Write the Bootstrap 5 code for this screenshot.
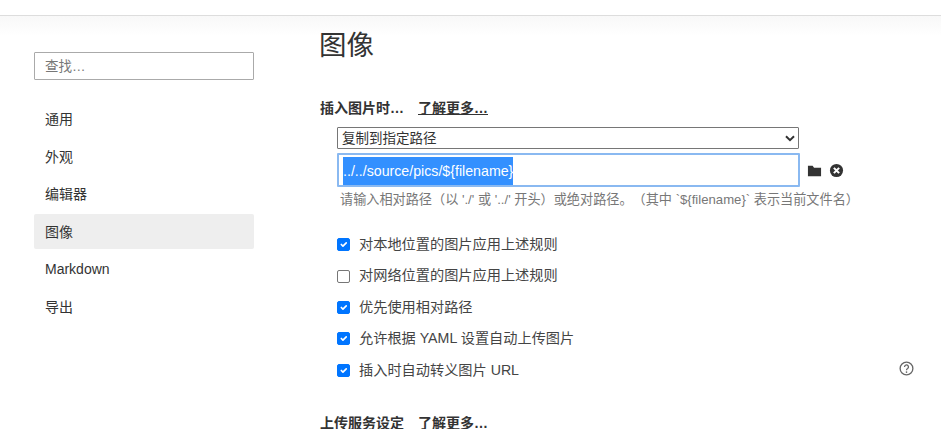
<!DOCTYPE html>
<html lang="zh-CN">
<head>
<meta charset="utf-8">
<title>偏好设置 - 图像</title>
<link href="https://cdn.jsdelivr.net/npm/bootstrap@5.3.0/dist/css/bootstrap.min.css" rel="stylesheet">
<style>
html, body { height: 100%; overflow: hidden; }
body { font-family: "Liberation Sans", "Noto Sans CJK SC", sans-serif; font-size: 14px; color: #333; background: #fff; text-spacing-trim: space-all; }
.top-strip { height: 16px; background: #fff; border-bottom: 1px solid #ddd; }
.top-fade { height: 20px; background: linear-gradient(#f8f8f8, #fff); }
.shell { height: 393px; }
.side-pane { width: 288px; padding: 16px 34px 0; flex: none; }
.side-search { height: 28px; border: 1px solid #aaa; border-radius: 1px; padding: 0 10px; font-size: 13.5px; color: #333; }
.side-search::placeholder { color: #777; }
.side-search:focus { border-color: #aaa; box-shadow: none; }
.side-nav { margin-top: 21px; }
.side-link { display: block; height: 35px; line-height: 36px; padding: 0 11px; margin-bottom: 2.5px; color: #333; border-radius: 2px; text-decoration: none; font-size: 14px; }
.side-link.is-on { background: #eee; }
.main-pane { padding-left: 32px; position: relative; flex: 1; margin-top: -24px; min-width: 0; }
.pane-title { font-size: 27.5px; font-weight: 400; line-height: 36px; margin: 16px 0 0 -1px; color: #333; }
.group-title { font-weight: 700; font-size: 14px; line-height: 18px; margin: 35px 0 0; color: #333; white-space: nowrap; }
.group-title a { color: #333; margin-left: 14px; text-decoration: underline; }
.group-title.plain-link { margin-top: 31px; line-height: 12px; }
.group-title.plain-link a { text-decoration: none; }
.opt-block { margin-left: 17px; width: 462px; }
.path-select { width: 462px; height: 22px; padding: 1px 0 0 4px; font-size: 13.5px; line-height: 18px; color: #333; border: 1px solid #767676; border-radius: 1px; margin-top: 10px; background-image: url("data:image/svg+xml,%3Csvg xmlns='http://www.w3.org/2000/svg' viewBox='0 0 10 7'%3E%3Cpath d='M1 1.2l4 4 4-4' fill='none' stroke='%23333' stroke-width='2'/%3E%3C/svg%3E"); background-position: right 3px center; background-size: 10px 7px; }
.path-row { margin-top: 4px; gap: 7px; }
.path-input { width: 463px; height: 34px; flex: none; border: 2px solid #8ab9f1; padding: 2px 4px; font-size: 14.2px; line-height: 26px; color: #fff; border-radius: 1px; white-space: nowrap; overflow: hidden; }
.path-sel { display: inline-block; background: #3390ff; line-height: 28px; }
.path-btn { width: 15px; height: 15px; flex: none; }
.path-hint { color: #777; font-size: 13.15px; line-height: 18px; margin: 4px 0 0 20px; white-space: nowrap; }
.check-list { margin-top: 20px; margin-left: 17px; }
.check-line { height: 31.4px; display: flex; align-items: center; margin: 0; padding: 0; min-height: 0; }
.check-line .form-check-input { width: 13px; height: 13px; margin: 0 9px 0 0; border-radius: 2px; border-color: #767676; float: none; flex: none; }
.check-line .form-check-input:checked { background-color: #0075ff; border-color: #0075ff; }
.check-line label { color: #444; font-size: 14.2px; }
.help-mark { position: absolute; left: 611px; top: 349px; width: 15px; height: 15px; }
</style>
</head>
<body>
<div class="top-strip"></div>
<div class="top-fade"></div>
<div class="d-flex shell">
  <aside class="side-pane">
    <input class="form-control side-search" type="text" placeholder="查找…">
    <nav class="side-nav">
      <a class="side-link" href="#">通用</a>
      <a class="side-link" href="#">外观</a>
      <a class="side-link" href="#">编辑器</a>
      <a class="side-link is-on" href="#">图像</a>
      <a class="side-link" href="#">Markdown</a>
      <a class="side-link" href="#">导出</a>
    </nav>
  </aside>
  <main class="main-pane">
    <h1 class="pane-title">图像</h1>
    <p class="group-title">插入图片时…<a href="#">了解更多…</a></p>
    <div class="opt-block">
      <select class="form-select path-select"><option>复制到指定路径</option></select>
      <div class="d-flex align-items-center path-row">
        <div class="form-control path-input"><span class="path-sel">../../source/pics/${filename}</span></div>
        <svg class="path-btn" viewBox="0 0 16 16" aria-hidden="true"><path fill="#333" d="M1 3h5l1.5 2H15v9H1z"/></svg>
        <svg class="path-btn" viewBox="0 0 16 16" aria-hidden="true"><circle cx="8" cy="8" r="7" fill="#333"/><path d="M5.2 5.2l5.6 5.6M10.8 5.2l-5.6 5.6" stroke="#fff" stroke-width="2.2"/></svg>
      </div>
    </div>
    <p class="path-hint">请输入相对路径（以 './' 或 '../' 开头）或绝对路径。（其中 `${filename}` 表示当前文件名）</p>
    <div class="check-list">
      <div class="form-check check-line"><input class="form-check-input" type="checkbox" id="c1" checked><label for="c1">对本地位置的图片应用上述规则</label></div>
      <div class="form-check check-line"><input class="form-check-input" type="checkbox" id="c2"><label for="c2">对网络位置的图片应用上述规则</label></div>
      <div class="form-check check-line"><input class="form-check-input" type="checkbox" id="c3" checked><label for="c3">优先使用相对路径</label></div>
      <div class="form-check check-line"><input class="form-check-input" type="checkbox" id="c4" checked><label for="c4">允许根据 YAML 设置自动上传图片</label></div>
      <div class="form-check check-line"><input class="form-check-input" type="checkbox" id="c5" checked><label for="c5">插入时自动转义图片 URL</label></div>
    </div>
    <p class="group-title plain-link">上传服务设定<a href="#">了解更多…</a></p>
    <svg class="help-mark" viewBox="0 0 16 16" aria-hidden="true"><circle cx="8" cy="8" r="6.8" fill="none" stroke="#666" stroke-width="1.4"/><path d="M5.9 6.3a2.1 2.1 0 1 1 3.3 1.7c-.8.5-1.2.9-1.2 1.8" fill="none" stroke="#666" stroke-width="1.4"/><circle cx="8" cy="11.8" r=".9" fill="#666"/></svg>
  </main>
</div>
<script src="https://cdn.jsdelivr.net/npm/bootstrap@5.3.0/dist/js/bootstrap.bundle.min.js"></script>
</body>
</html>
